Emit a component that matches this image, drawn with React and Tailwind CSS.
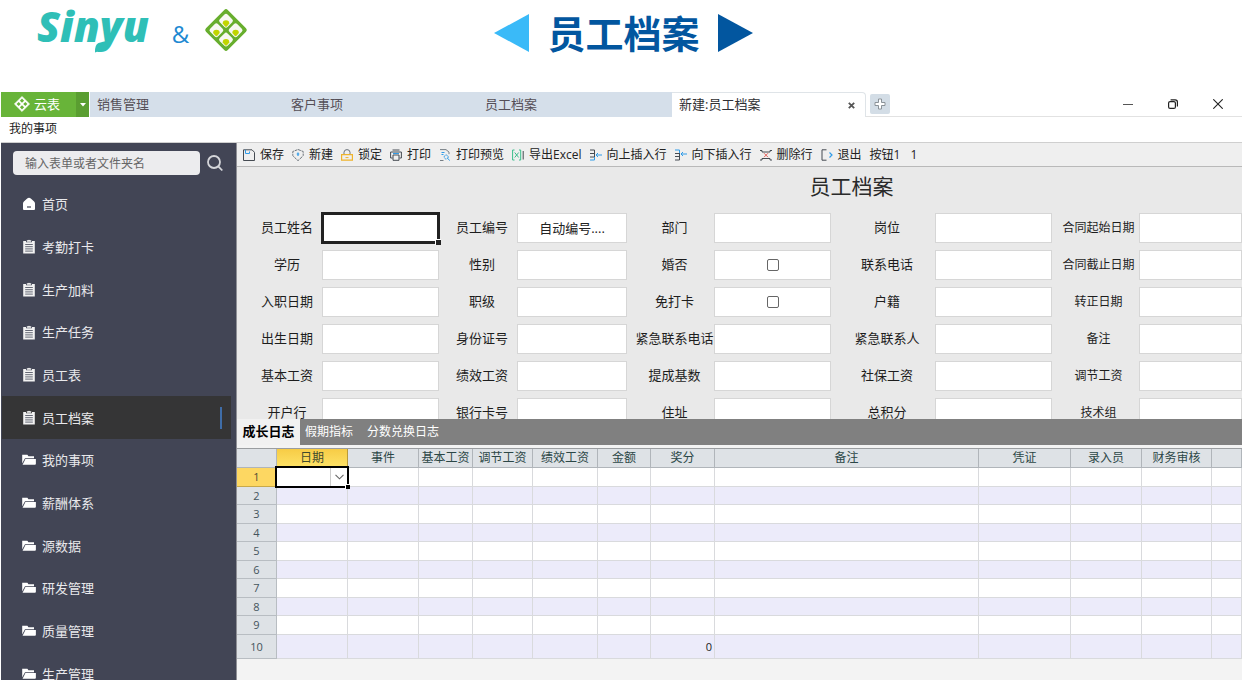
import React from "react";

const MENU = [
  ["home", "首页"],
  ["form", "考勤打卡"],
  ["form", "生产加料"],
  ["form", "生产任务"],
  ["form", "员工表"],
  ["form", "员工档案", true],
  ["folder", "我的事项"],
  ["folder", "薪酬体系"],
  ["folder", "源数据"],
  ["folder", "研发管理"],
  ["folder", "质量管理"],
  ["folder", "生产管理"],
];

const TOOLS = [
  ["save", "保存"],
  ["new", "新建"],
  ["lock", "锁定"],
  ["print", "打印"],
  ["preview", "打印预览"],
  ["excel", "导出Excel"],
  ["insertUp", "向上插入行"],
  ["insertDown", "向下插入行"],
  ["remove", "删除行"],
  ["exit", "退出"],
];

const FORM_ROWS = [
  ["员工姓名", "员工编号", "部门", "岗位", "合同起始日期"],
  ["学历", "性别", "婚否", "联系电话", "合同截止日期"],
  ["入职日期", "职级", "免打卡", "户籍", "转正日期"],
  ["出生日期", "身份证号", "紧急联系电话", "紧急联系人", "备注"],
  ["基本工资", "绩效工资", "提成基数", "社保工资", "调节工资"],
  ["开户行", "银行卡号", "住址", "总积分", "技术组"],
];
const CHECKS = ["婚否", "免打卡"];

const COLUMNS = [
  ["日期", "w-[71px]"],
  ["事件", "w-[71px]"],
  ["基本工资", "w-[54px]"],
  ["调节工资", "w-[60px]"],
  ["绩效工资", "w-[65px]"],
  ["金额", "w-[53px]"],
  ["奖分", "w-[64px]"],
  ["备注", ""],
  ["凭证", "w-[92px]"],
  ["录入员", "w-[71px]"],
  ["财务审核", "w-[70px]"],
  ["", "w-[30px]"],
];

function SheetLogo({ className }) {
  const spots = [[22, 12.8], [12.4, 22.2], [31.6, 22.2], [22, 31.6]];
  return (
    <svg viewBox="0 0 44 44" className={className} aria-hidden="true">
      <rect x="6.6" y="6.6" width="30.8" height="30.8" rx="2.5" fill="#67ae2d" transform="rotate(45 22 22)" />
      {spots.map(([x, y]) => (
        <g key={x + "-" + y}>
          <rect x={x - 5.5} y={y - 5.5} width="11" height="11" rx="2.2" fill="#f7f8f2" transform={`rotate(45 ${x} ${y})`} />
          <path d={`M${x - 3.300} ${y + 2.800}a3.300 3.300 0 0 1 6.600 0l-2.400 2.800q-.9.9-1.800 0z`} fill="#c1d500" />
        </g>
      ))}
    </svg>
  );
}

function BrandMark() {
  return (
    <svg viewBox="0 0 16 16" className="size-4" aria-hidden="true">
      <path d="M8 .4 15.600 8 8 15.600.4 8z" fill="#fff" stroke="#fff" strokeWidth=".6" strokeLinejoin="round" />
      <path d="M8 2.600 10.100 4.700 8 6.800 5.900 4.700zM4.700 5.900 6.800 8 4.700 10.100 2.600 8zM11.300 5.900 13.400 8l-2.100 2.100L9.200 8zM8 9.200l2.100 2.100L8 13.400l-2.100-2.100z" fill="#68b439" />
    </svg>
  );
}

function MenuIcon({ kind }) {
  if (kind === "home")
    return (
      <svg viewBox="0 0 14 14" className="size-3.5" aria-hidden="true">
        <path d="M7 .8q1 0 1.800.8l3.300 2.900q.9.9.9 2V12q0 1-1 1H2q-1 0-1-1V6.500q0-1.100.9-2l3.300-2.900Q6 .8 7 .8z" fill="#fff" />
        <path d="M5 10h4" stroke="#424555" strokeWidth="1.200" />
      </svg>
    );
  if (kind === "form")
    return (
      <svg viewBox="0 0 14 15" className="h-[15px] w-3.5" aria-hidden="true">
        <path d="M1.200 2h2.800v1.300h6V2h2.800v12.500H1.200zM4.800 2.700V1.300h1.200Q7 0 8 1.300h1.200v1.400z" fill="#f2f2f2" />
        <path d="M3.200 5.500h7.600M3.200 7.700h7.600M3.200 9.900h7.600M3.200 12.100h7.600" stroke="#555866" strokeWidth=".9" />
      </svg>
    );
  return (
    <svg viewBox="0 0 14 14" className="size-3.5" aria-hidden="true">
      <path d="M.2 10.500V1.800h5.200l1 1.500h5.600v1.900H3L1.200 8.500z" fill="#fff" />
      <path d="M3.400 6H13.900v4.800q0 1-1 1H.6z" fill="#fff" />
    </svg>
  );
}

function ToolIcon({ kind }) {
  const dark = "#454b52";
  const blue = "#2f9be8";
  const art = {
    save: (
      <>
        <path d="M.5.8h8.500l2.500 2.500v8.200H.5z" stroke={dark} />
        <path d="M2.500.8v3.700h4V2.500" stroke={blue} />
      </>
    ),
    new: (
      <>
        <path d="M6 .5 11.200 2.500v4.200L6 11.700.8 6.700V2.500z" stroke="#6d747b" strokeDasharray="3 .8" />
        <path d="M6 3.500v3.500M4.700 5h2.600" stroke={blue} strokeWidth="1.200" />
      </>
    ),
    lock: (
      <>
        <path d="M3 5.500V3.200Q3.200.6 6 .6t3 2.600v2.300" stroke="#6d747b" />
        <path d="M.6 5.700h10.800v5.500H.6z" stroke="#efb42c" strokeWidth="1.200" />
        <path d="M4.500 8.600h3" stroke="#efb42c" />
      </>
    ),
    print: (
      <>
        <path d="M2.500 1h7M2.500 9H.6V3h10.800v6H9.500M3 6h6v5.300H3z" stroke={dark} />
        <path d="M3 4.500h6" stroke={blue} />
      </>
    ),
    preview: (
      <>
        <path d="M1 .6h6l3 2.500v2M1 11.500h3.500" stroke="#777e85" />
        <path d="M2.500 3.500h3M2.500 5.500h2" stroke={blue} />
        <circle cx="7.200" cy="8" r="2" stroke={blue} strokeDasharray="2 .6" />
        <path d="m8.800 9.600 2 1.900" stroke={blue} />
      </>
    ),
    excel: (
      <>
        <path d="M2.500 1H.6v10h1.900M7 1h1.700v10H7" stroke="#3bbd8b" />
        <path d="m2.700 3.500 4 5M6.700 3.500l-4 5" stroke="#3bbd8b" />
        <path d="M11.200 2v8.500" stroke={dark} />
      </>
    ),
    insertUp: (
      <>
        <path d="M0 1h4.500v7M0 4.500h4.500M0 8h4.500" stroke={dark} />
        <path d="M0 11h4.500V8M12 6H6m2-2L6 6l2 2" stroke={blue} />
      </>
    ),
    insertDown: (
      <>
        <path d="M0 11h4.500V4M0 7.500h4.500M0 4.500h4.500" stroke={dark} />
        <path d="M0 1h4.500v3M12 5H6m2-2L6 5l2 2" stroke={blue} />
      </>
    ),
    remove: (
      <>
        <path d="M0 1.500h2v1.500h8V1.500h2M0 11h2V9.500h8V11h2" stroke={dark} />
        <path d="m4 4.200 4 4M8 4.200l-4 4" stroke="#e2625c" />
      </>
    ),
    exit: (
      <>
        <path d="M5.500.8H1v10.400h4.500" stroke={dark} />
        <path d="m8.500 3.500 2.500 2.500-2.500 2.500" stroke={blue} strokeWidth="1.200" />
      </>
    ),
  };
  return (
    <svg viewBox="0 0 12 12" className="size-3 shrink-0" fill="none" aria-hidden="true">
      {art[kind]}
    </svg>
  );
}

function PageHeader() {
  return (
    <header className="grid h-[92px] shrink-0 grid-cols-[1fr_auto_1fr] pl-1">
      <div className="flex h-[60px] items-center pl-8">
        <div className="relative mb-2 w-[116px] font-['Open_Sans',sans-serif] text-[42px] leading-[52px] font-extrabold text-[#2fbfb7] italic">
          Sinyu
          <svg viewBox="0 0 17 13" className="absolute top-[40px] left-[57px] h-[13px] w-[17px]" aria-hidden="true">
            <path d="M1 12.500Q.5 5 4.500 3 8 1.800 15.500.5 14 6.500 11.500 8.300 9 9.800 1 12.500z" fill="#2fbfb7" />
          </svg>
        </div>
        <span className="w-[51px] pt-2 pl-1 text-center text-[24px] text-[#2089d2]">&amp;</span>
        <SheetLogo className="size-11" />
      </div>
      <div className="flex h-[66px] items-center gap-[18px]">
        <button type="button" aria-label="上一个">
          <svg viewBox="0 0 35 38" className="h-[38px] w-[35px]"><path d="M35 0v38L0 19z" fill="#3abaf8" /></svg>
        </button>
        <h1 className="text-[38px] leading-[50px] font-bold text-[#02569f]">员工档案</h1>
        <button type="button" aria-label="下一个">
          <svg viewBox="0 0 35 38" className="h-[38px] w-[35px]"><path d="M0 0v38l35-19z" fill="#02569f" /></svg>
        </button>
      </div>
    </header>
  );
}

function TabStrip() {
  return (
    <div className="flex h-[25px] shrink-0 text-[13px] leading-6">
      <button type="button" className="flex w-[75px] items-center gap-1 bg-[#68b439] pb-0.5 pl-[13px] text-white">
        <BrandMark />
        云表
      </button>
      <button type="button" aria-label="更多" className="mr-px flex w-[13px] items-center justify-center bg-[#5a9e31]">
        <svg viewBox="0 0 6 4" className="h-1 w-1.5"><path d="M0 0h6L3 3.500z" fill="#fff" /></svg>
      </button>
      {["销售管理", "客户事项", "员工档案"].map((t) => (
        <button key={t} type="button" className="w-[194px] bg-[#d5dfea] pb-0.5 pl-[7px] text-left text-[#554f57]">
          {t}
        </button>
      ))}
      <div className="flex w-[194px] items-center justify-between rounded-tr border-t border-r border-[#dfe4e8] pr-2 pl-[7px]">
        <button type="button" className="pb-0.5 text-[#2f2f33]">新建:员工档案</button>
        <button type="button" aria-label="关闭标签" className="p-0.5">
          <svg viewBox="0 0 7 7" className="size-[7px]"><path d="m.8.8 5.400 5.400M6.200.8.8 6.200" stroke="#555" strokeWidth="1.800" /></svg>
        </button>
      </div>
      <div className="flex flex-1 items-center border-b border-[#e2e2e2] pl-1">
        <button type="button" aria-label="新标签" className="flex size-5 items-center justify-center rounded-xs bg-[#d3dde6]">
          <svg viewBox="0 0 12 12" className="size-3"><path d="M4.500 1h3v3.500H11v3H7.500V11h-3V7.500H1v-3h3.500z" fill="#fff" stroke="#8b9298" /></svg>
        </button>
        <div className="ml-auto flex gap-[35px] pr-[19px]">
          <button type="button" aria-label="最小化"><svg viewBox="0 0 10 10" className="size-2.5"><path d="M0 5.500h10" stroke="#555" /></svg></button>
          <button type="button" aria-label="还原">
            <svg viewBox="0 0 10 10" className="size-2.5" fill="none" stroke="#222" strokeWidth="1.200"><rect x=".6" y="2.600" width="6.800" height="6.800" rx="1.500" /><path d="M2.600.8h4.600q2.200 0 2.200 2.200v4.500" /></svg>
          </button>
          <button type="button" aria-label="关闭"><svg viewBox="0 0 10 10" className="size-2.5"><path d="m.3.3 9.400 9.400M9.700.3.3 9.700" stroke="#222" strokeWidth="1.100" /></svg></button>
        </div>
      </div>
    </div>
  );
}

function Sidebar() {
  return (
    <aside className="w-[235px] shrink-0 overflow-hidden bg-[#424555]">
      <div className="flex h-10 items-center pl-3">
        <input
          type="text"
          aria-label="搜索"
          placeholder="输入表单或者文件夹名"
          className="h-6 w-[187px] rounded bg-[#ececee] px-3 text-xs text-[#333] placeholder:text-[#666]"
        />
        <button type="button" aria-label="搜索" className="ml-1.5">
          <svg viewBox="0 0 18 18" className="size-[18px]" fill="none" stroke="#d5d6da" strokeWidth="1.800"><circle cx="8" cy="8" r="6" /><path d="m12.300 12.300 4 4.200" /></svg>
        </button>
      </div>
      <nav>
        <ul className="grid h-[512px] auto-rows-fr">
          {MENU.map(([kind, text, active]) => (
            <li key={text} className="pr-[5px] pl-px">
              <a href="#" className={active ? "flex h-full items-center gap-1.5 bg-[#353536] pl-5" : "flex h-full items-center gap-1.5 pl-5"}>
                <MenuIcon kind={kind} />
                <span className="text-[13px] leading-5 text-[#e9e9ec]">{text}</span>
                {active && <span className="mr-[9px] ml-auto h-[22px] w-0.5 bg-[#3f6da8]" />}
              </a>
            </li>
          ))}
        </ul>
      </nav>
    </aside>
  );
}

function Toolbar() {
  return (
    <div className="flex h-6 shrink-0 items-center gap-2 overflow-hidden border-b border-[#b9b9b9] bg-[#efefef] pl-1.5 text-xs leading-4 whitespace-nowrap text-[#222]">
      {TOOLS.map(([kind, text]) => (
        <button key={kind} type="button" className="flex items-center gap-[5px]">
          <ToolIcon kind={kind} />
          {text}
        </button>
      ))}
      <button type="button">按钮1</button>
      <button type="button" className="pl-0.5">1</button>
    </div>
  );
}

function Field({ name, row, col }) {
  const id = `field-${row}-${col}`;
  const label = (
    <label htmlFor={id} className={col === 4 ? "pl-1.5 text-center text-xs whitespace-nowrap text-[#1d1d1d]" : "pl-2 text-center text-[13px] whitespace-nowrap text-[#1d1d1d]"}>
      {name}
    </label>
  );
  if (CHECKS.includes(name))
    return (
      <>
        {label}
        <div className="flex h-[30px] items-center justify-center border border-[#d6d6d6] bg-white">
          <input id={id} type="checkbox" className="size-3 appearance-none rounded-xs border border-[#666] bg-white checked:bg-[#3f6da8]" />
        </div>
      </>
    );
  if (row === 0 && col === 0)
    return (
      <>
        {label}
        <div className="relative h-[30px]">
          <input id={id} type="text" className="h-full w-full bg-white px-1 text-[13px] outline-3 -outline-offset-2 outline-[#222]" />
          <span className="absolute -right-0.5 -bottom-0.5 size-1.5 border-t border-l border-white bg-[#222]" />
        </div>
      </>
    );
  return (
    <>
      {label}
      <input
        id={id}
        type="text"
        defaultValue={name === "员工编号" ? "自动编号...." : ""}
        className="h-[30px] w-full min-w-0 border border-[#d6d6d6] bg-white px-1 pb-0.5 text-center text-[13px] text-[#222]"
      />
    </>
  );
}

function EmployeeForm() {
  return (
    <form className="h-[252px] shrink-0 overflow-hidden bg-[#e9e9e9]">
      <h2 className="mb-1.5 h-10 pl-[224px] text-center text-[21px] leading-[38px] text-[#2a2a2a]">员工档案</h2>
      <div className="grid grid-cols-[78fr_117fr_78fr_110fr_87fr_117fr_104fr_117fr_87fr_103fr] items-center gap-y-[7px] pl-[7px]">
        {FORM_ROWS.map((names, r) => names.map((n, c) => <Field key={r + "-" + c} name={n} row={r} col={c} />))}
      </div>
    </form>
  );
}

function DateCell() {
  return (
    <td className="border-r border-b border-[#d9dadd] bg-white p-0">
      <div className="relative h-[18px] outline-2 outline-black">
        <select aria-label="日期" className="h-full w-full appearance-none bg-white pl-1 text-xs outline-none">
          <option value=""></option>
        </select>
        <span className="pointer-events-none absolute inset-y-0 right-0 flex w-[17px] items-center justify-center border-l border-[#ccc]">
          <svg viewBox="0 0 9 6" className="h-1.5 w-[9px]"><path d="m.5.800 4 4 4-4" fill="none" stroke="#666" strokeWidth="1.100" /></svg>
        </span>
        <span className="absolute -right-[3px] -bottom-[3px] size-[5px] border-t border-l border-white bg-black" />
      </div>
    </td>
  );
}

function Grid() {
  return (
    <table className="w-full table-fixed border-separate border-spacing-0 border-t border-[#9a9da0] text-xs leading-4">
      <colgroup>
        <col className="w-10" />
        {COLUMNS.map(([name, w]) => <col key={name || "end"} className={w} />)}
      </colgroup>
      <thead>
        <tr>
          <td className="h-[19px] border-r border-b border-[#b0b5ba] bg-[#dee2e6] p-0" />
          {COLUMNS.map(([name], i) => (
            <th
              key={i}
              scope="col"
              className={
                i === 0
                  ? "border-r border-b border-[#b89a3c] bg-linear-to-b from-[#f7cc45] to-[#fde266] p-0 font-normal whitespace-nowrap text-[#3f4a2c]"
                  : "border-r border-b border-[#b0b5ba] bg-[#dee2e6] p-0 font-normal whitespace-nowrap text-[#2c4747]"
              }
            >
              {name}
            </th>
          ))}
        </tr>
      </thead>
      <tbody>
        {Array.from({ length: 10 }, (_, r) => (
          <tr key={r} className={r === 9 ? "h-6 bg-[#ecebfa]" : r % 2 ? "h-[18px] bg-[#ecebfa]" : "h-[19px] bg-white"}>
            <th
              scope="row"
              className={
                r === 0
                  ? "border-r border-b border-[#c8a94a] bg-[#fdd762] p-0 text-[11px] font-normal text-[#4d4a35]"
                  : "border-r border-b border-[#b8bdc2] bg-[#dee2e6] p-0 text-[11px] font-normal text-[#44545c]"
              }
            >
              {r + 1}
            </th>
            {COLUMNS.map((_, c) =>
              r === 0 && c === 0 ? (
                <DateCell key={c} />
              ) : (
                <td key={c} className="border-r border-b border-[#d9dadd] p-0 pr-0.5 text-right text-[11px] text-[#222]">
                  {r === 9 && c === 6 ? "0" : ""}
                </td>
              )
            )}
          </tr>
        ))}
      </tbody>
    </table>
  );
}

export default function App() {
  return (
    <div className="flex h-screen flex-col overflow-hidden bg-white pr-0.5 pb-px pl-px font-['Open_Sans','Noto_Sans_CJK_SC',sans-serif]">
      <PageHeader />
      <TabStrip />
      <div className="h-[25px] shrink-0 pl-2 text-xs leading-[23px] text-[#222]">我的事项</div>
      <div className="flex min-h-0 flex-1 border-t border-[#cfcfcf]">
        <Sidebar />
        <main className="flex min-w-0 flex-1 flex-col border-l border-[#8f9096]">
          <Toolbar />
          <EmployeeForm />
          <div role="tablist" className="flex h-[26px] shrink-0 bg-[#808080] text-xs">
            <button type="button" role="tab" aria-selected="true" className="w-[63px] bg-[#f1f1f1] text-[13px] font-bold text-black">成长日志</button>
            <button type="button" role="tab" aria-selected="false" className="w-[58px] text-white">假期指标</button>
            <button type="button" role="tab" aria-selected="false" className="w-[90px] text-white">分数兑换日志</button>
          </div>
          <div className="flex-1 overflow-hidden bg-[#f3f3f3] pt-[3px]">
            <Grid />
          </div>
        </main>
      </div>
    </div>
  );
}
